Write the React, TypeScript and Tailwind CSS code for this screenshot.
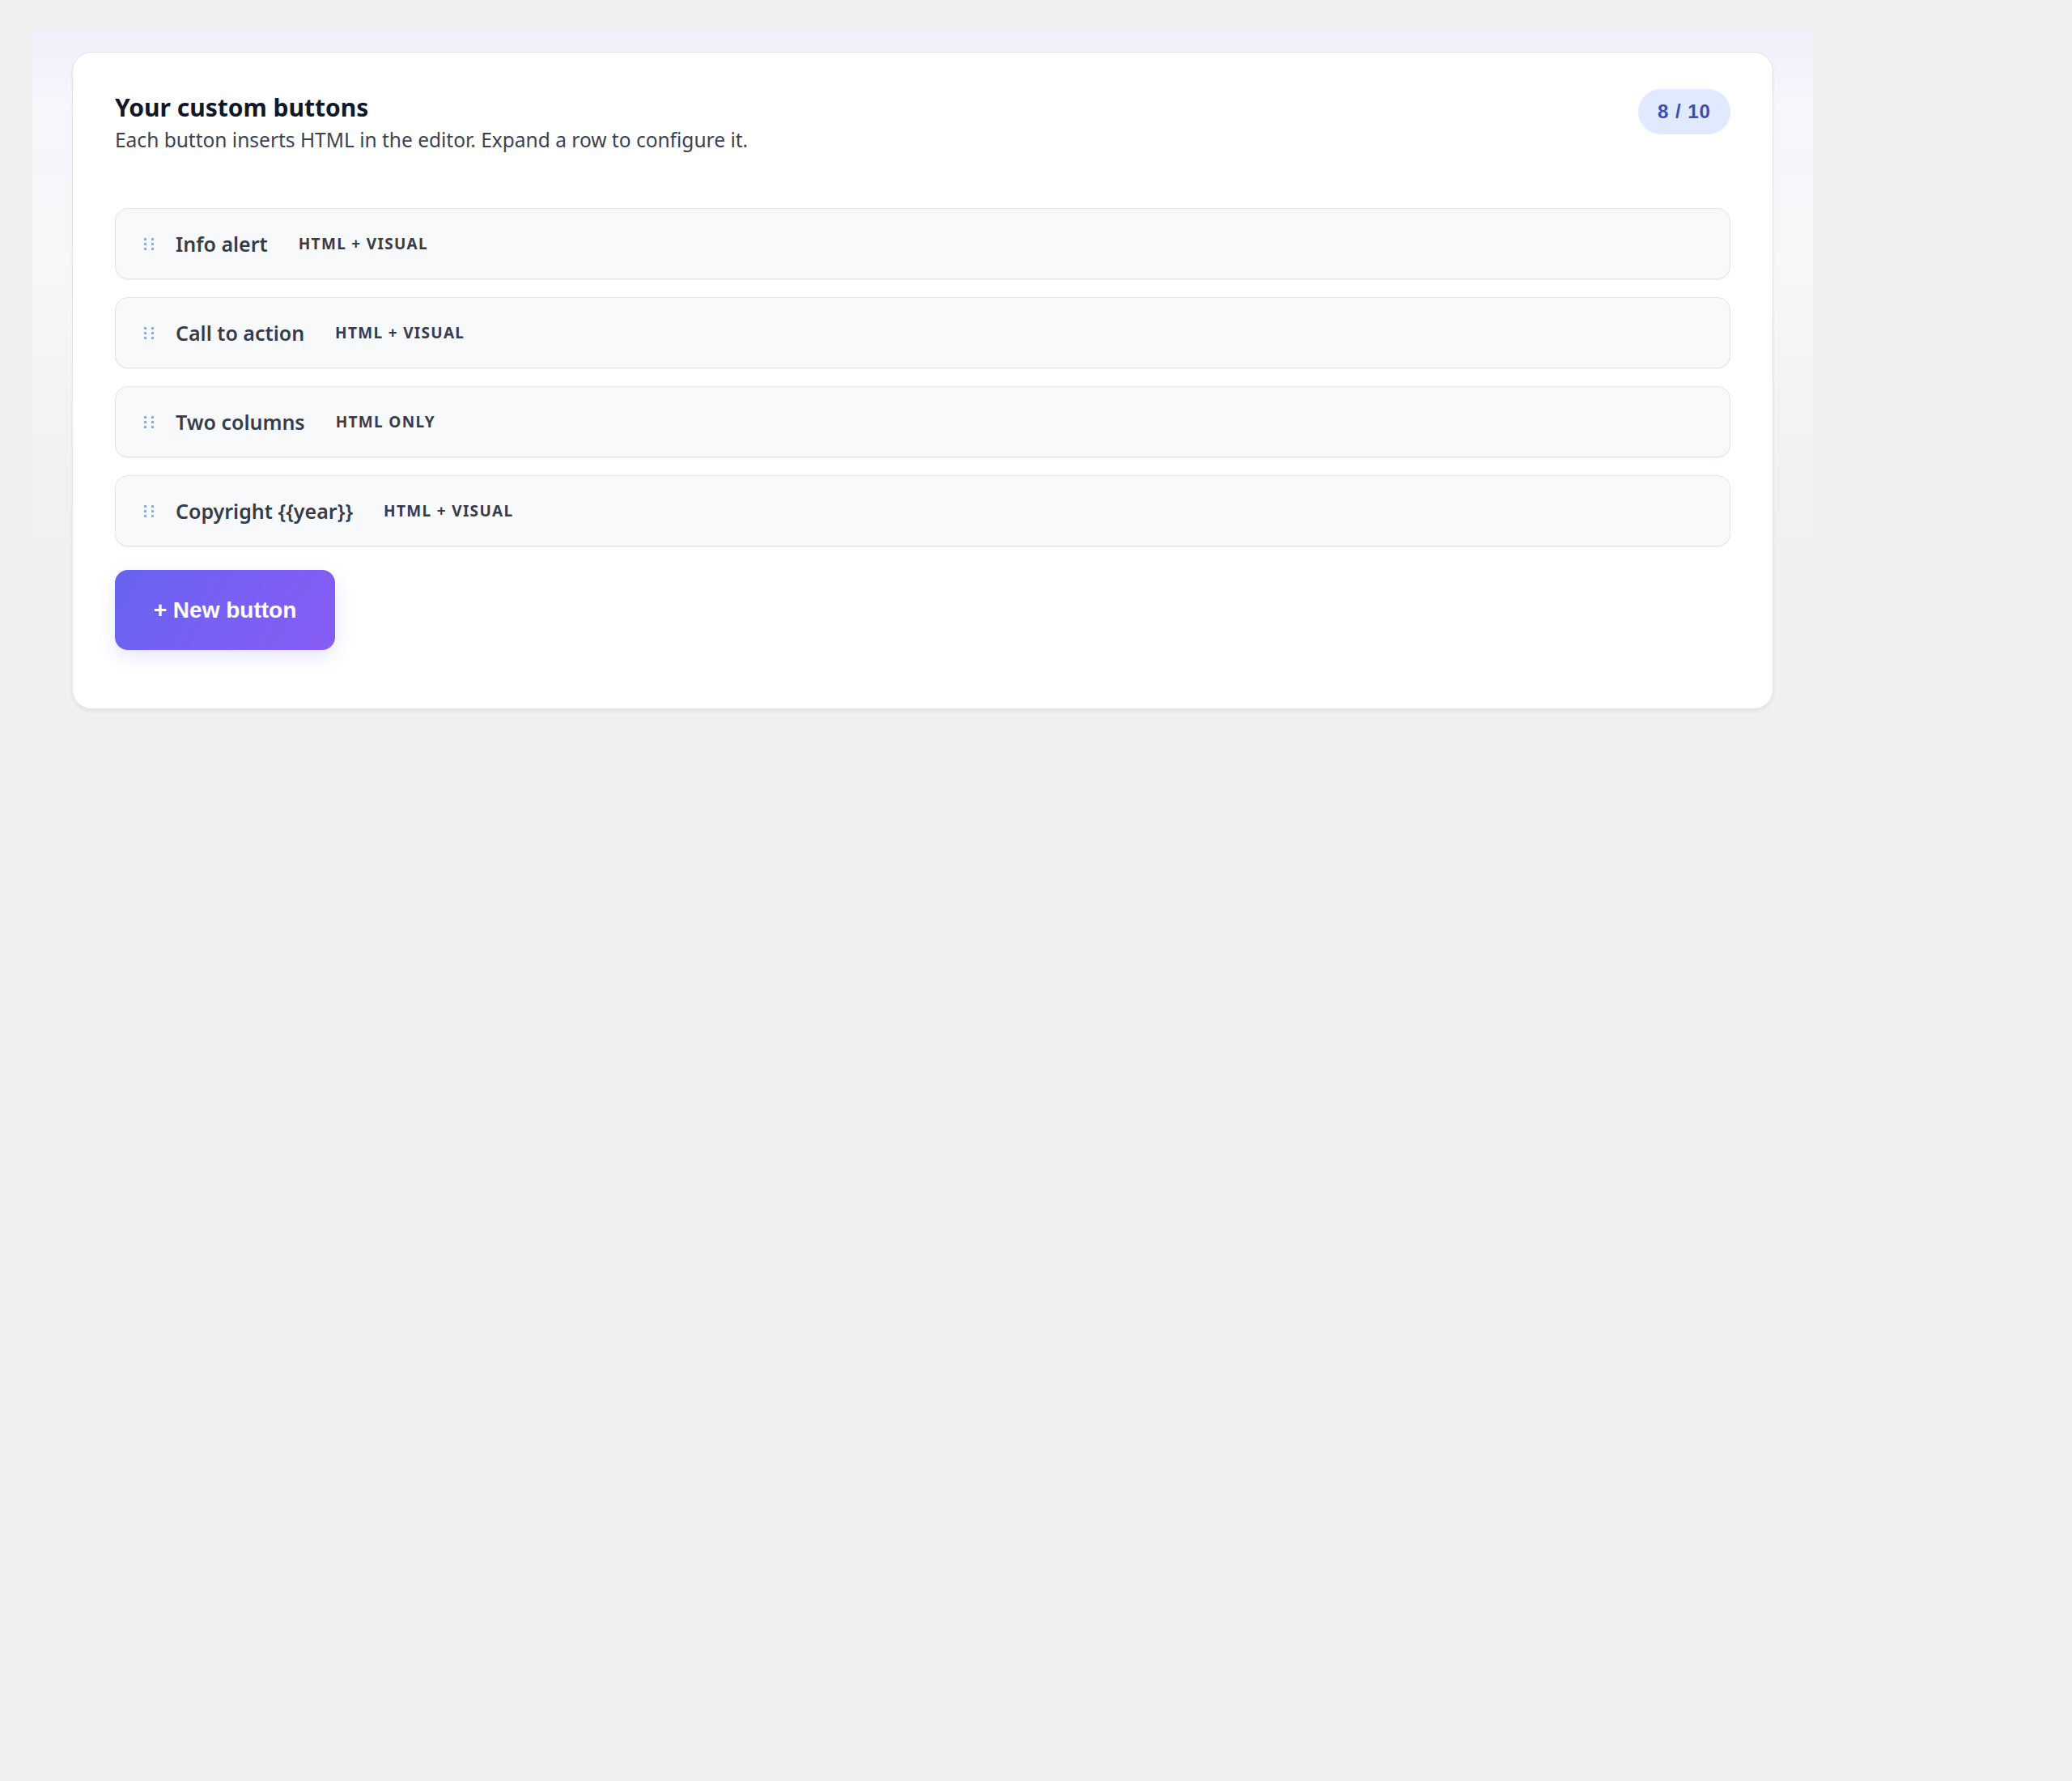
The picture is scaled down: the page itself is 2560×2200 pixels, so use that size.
import React from "react";

type CustomButton = {
  name: string;
  mode: string;
};

const buttons: CustomButton[] = [
  { name: "Info alert", mode: "HTML + VISUAL" },
  { name: "Call to action", mode: "HTML + VISUAL" },
  { name: "Two columns", mode: "HTML ONLY" },
  { name: "Copyright {{year}}", mode: "HTML + VISUAL" },
];

function DragHandle() {
  const dots: [number, number][] = [
    [1.5, 1.5],
    [10.5, 1.5],
    [1.5, 7.5],
    [10.5, 7.5],
    [1.5, 13.5],
    [10.5, 13.5],
  ];
  return (
    <svg width="12" height="15" viewBox="0 0 12 15" className="shrink-0" aria-hidden="true">
      {dots.map(([cx, cy], i) => (
        <rect key={i} x={cx - 1.5} y={cy - 1.5} width="3" height="3" rx="0.8" fill="#86a9dc" />
      ))}
    </svg>
  );
}

function ButtonRow({ item }: { item: CustomButton }) {
  return (
    <div className="flex h-[88px] items-center rounded-[16px] border border-[#e3e5ea] bg-[#f8f9fb] pl-[35px] shadow-[0_1px_1px_rgba(0,0,0,0.06)]">
      <DragHandle />
      <span className="ml-[27px] text-[25px] font-semibold leading-none text-[#363c4b]">{item.name}</span>
      <span className="ml-[38px] text-[19px] font-bold uppercase leading-none tracking-[0.07em] text-[#363c4b]">
        {item.mode}
      </span>
    </div>
  );
}

export default function App() {
  return (
    <div className="min-h-[2200px] w-full bg-[#f0f0f0] pt-[40px] pl-[40px] font-['Noto_Sans',sans-serif]">
      <div className="w-[2200px] bg-[linear-gradient(180deg,#efeffc_0%,#f6f6fb_14%,#f7f7f9_45%,#f0f0f0_100%)] bg-[length:100%_630px] bg-no-repeat px-[49px] pt-[24px]">
        <section className="rounded-[24px] border border-[#e3e5ea] bg-white px-[52px] pt-[45px] pb-[72px] shadow-[0_3px_4px_rgba(0,0,0,0.05)]">
          <header className="flex items-start justify-between">
            <div className="pt-[5px]">
              <h1 className="text-[30px] font-bold leading-[36px] text-[#111827]">Your custom buttons</h1>
              <p className="mt-[5px] text-[24.5px] leading-[34px] text-[#3b4252]">
                Each button inserts HTML in the editor. Expand a row to configure it.
              </p>
            </div>
            <span className="flex h-[56px] w-[114px] items-center justify-center rounded-full bg-[#e0e9fe] font-['Liberation_Sans',Arial,sans-serif] text-[24px] font-bold tracking-[0.04em] text-[#3b4fb4]">
              8 / 10
            </span>
          </header>

          <div className="mt-[67px] flex flex-col gap-[22px]">
            {buttons.map((b) => (
              <ButtonRow key={b.name} item={b} />
            ))}
          </div>

          <button
            type="button"
            className="mt-[29px] flex h-[99px] w-[272px] items-center justify-center rounded-[16px] bg-[linear-gradient(120deg,#6764f1_0%,#7c5ff4_60%,#875df6_100%)] font-['Liberation_Sans',Arial,sans-serif] text-[28px] font-bold text-white shadow-[0_8px_22px_rgba(99,102,241,0.16)]"
          >
            + New button
          </button>
        </section>
      </div>
    </div>
  );
}
